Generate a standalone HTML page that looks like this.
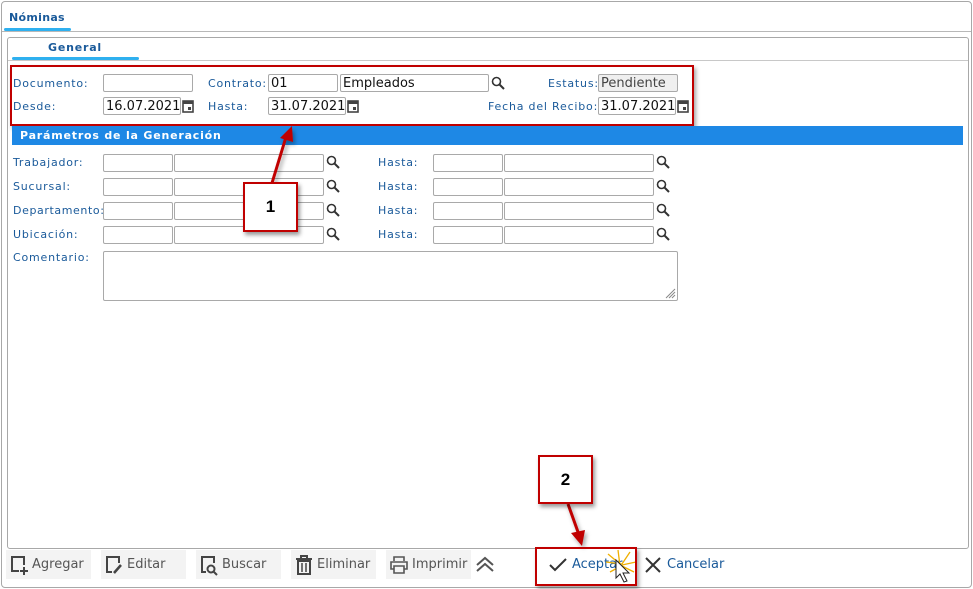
<!DOCTYPE html>
<html><head><meta charset="utf-8"><style>
*{box-sizing:border-box;margin:0;padding:0}
body{width:973px;height:589px;background:#fff;position:relative;overflow:hidden;font-family:"DejaVu Sans","Liberation Sans",sans-serif;font-size:11px}
.a{position:absolute}
.lbl{position:absolute;color:#1a5a9a;font-size:11px;line-height:13px;white-space:nowrap;letter-spacing:.8px}
.in{position:absolute;height:18px;border:1px solid #a9a9a9;border-radius:2px;background:#fff;font-size:13px;line-height:16px;padding-left:2px;padding-top:1px;color:#111}
.srch{position:absolute;width:14px;height:14px}
.cal{position:absolute;width:12px;height:14px}
.btn{position:absolute;top:550px;height:29px;background:#f3f3f3;color:#555;font-size:13px;line-height:29px}
.btn svg{position:absolute;left:3px;top:4px}
.btn span{position:absolute;left:26px}
</style></head><body>
<div class="a" style="left:1px;top:1px;width:971px;height:587px;border:1px solid #a8a8a8;border-radius:4px"></div>
<div class="a" style="left:9px;top:11px;color:#1a5a9a;font-weight:bold;font-size:11px;letter-spacing:.3px">Nóminas</div>
<div class="a" style="left:4px;top:28px;width:67px;height:3px;background:#2fb0ef;border-radius:2px"></div>
<div class="a" style="left:2px;top:31px;width:969px;height:1px;background:#b8b8b8"></div>
<div class="a" style="left:7px;top:37px;width:962px;height:512px;border:1px solid #a8a8a8;border-radius:3px"></div>
<div class="a" style="left:48px;top:41px;color:#1a5a9a;font-weight:bold;font-size:11px;letter-spacing:.8px">General</div>
<div class="a" style="left:12px;top:57px;width:127px;height:3px;background:#2fb0ef;border-radius:2px"></div>
<div class="a" style="left:8px;top:60px;width:960px;height:1px;background:#c8c8c8"></div>

<div class="a" style="left:10px;top:65px;width:684px;height:61px;border:2px solid #c00000;box-shadow:2px 3px 4px rgba(0,0,0,.35)"></div>

<div class="lbl" style="left:13px;top:77px">Documento:</div>
<div class="in" style="left:103px;top:74px;width:90px"></div>
<div class="lbl" style="left:208px;top:77px">Contrato:</div>
<div class="in" style="left:268px;top:74px;width:70px">01</div>
<div class="in" style="left:340px;top:74px;width:149px">Empleados</div>
<svg class="srch" style="left:491px;top:76px" viewBox="0 0 14 14"><circle cx="5.5" cy="5.5" r="4" fill="none" stroke="#333" stroke-width="1.6"/><path d="M8.5 8.5L13 13" stroke="#333" stroke-width="2"/></svg>
<div class="lbl" style="left:548px;top:77px">Estatus:</div>
<div class="in" style="left:598px;top:74px;width:80px;background:#efefef;color:#444">Pendiente</div>

<div class="lbl" style="left:13px;top:100px">Desde:</div>
<div class="in" style="left:103px;top:97px;width:78px">16.07.2021</div>
<svg class="cal" style="left:182px;top:99px" viewBox="0 0 12 14"><rect x="1" y="2" width="10" height="11" fill="none" stroke="#444" stroke-width="1.6"/><rect x="1" y="2" width="10" height="3" fill="#444"/><rect x="6" y="8" width="3" height="3" fill="#444"/></svg>
<div class="lbl" style="left:208px;top:100px">Hasta:</div>
<div class="in" style="left:268px;top:97px;width:78px">31.07.2021</div>
<svg class="cal" style="left:347px;top:99px" viewBox="0 0 12 14"><rect x="1" y="2" width="10" height="11" fill="none" stroke="#444" stroke-width="1.6"/><rect x="1" y="2" width="10" height="3" fill="#444"/><rect x="6" y="8" width="3" height="3" fill="#444"/></svg>
<div class="lbl" style="left:488px;top:100px">Fecha del Recibo:</div>
<div class="in" style="left:598px;top:97px;width:78px">31.07.2021</div>
<svg class="cal" style="left:677px;top:99px" viewBox="0 0 12 14"><rect x="1" y="2" width="10" height="11" fill="none" stroke="#444" stroke-width="1.6"/><rect x="1" y="2" width="10" height="3" fill="#444"/><rect x="6" y="8" width="3" height="3" fill="#444"/></svg>

<div class="a" style="left:12px;top:126px;width:951px;height:19px;background:#1e88e5;color:#fff;font-weight:bold;font-size:11px;line-height:19px;padding-left:8px;letter-spacing:.8px">Parámetros de la Generación</div>

<div class="lbl" style="left:13px;top:156px">Trabajador:</div>
<div class="lbl" style="left:13px;top:180px">Sucursal:</div>
<div class="lbl" style="left:13px;top:204px;letter-spacing:.6px">Departamento:</div>
<div class="lbl" style="left:13px;top:228px">Ubicación:</div>
<div class="lbl" style="left:13px;top:251px">Comentario:</div>

<div class="in" style="left:103px;top:154px;width:70px"></div><div class="in" style="left:174px;top:154px;width:150px"></div>
<div class="in" style="left:103px;top:178px;width:70px"></div><div class="in" style="left:174px;top:178px;width:150px"></div>
<div class="in" style="left:103px;top:202px;width:70px"></div><div class="in" style="left:174px;top:202px;width:150px"></div>
<div class="in" style="left:103px;top:226px;width:70px"></div><div class="in" style="left:174px;top:226px;width:150px"></div>
<svg class="srch" style="left:326px;top:155px" viewBox="0 0 14 14"><circle cx="5.5" cy="5.5" r="4" fill="none" stroke="#333" stroke-width="1.6"/><path d="M8.5 8.5L13 13" stroke="#333" stroke-width="2"/></svg>
<svg class="srch" style="left:326px;top:179px" viewBox="0 0 14 14"><circle cx="5.5" cy="5.5" r="4" fill="none" stroke="#333" stroke-width="1.6"/><path d="M8.5 8.5L13 13" stroke="#333" stroke-width="2"/></svg>
<svg class="srch" style="left:326px;top:203px" viewBox="0 0 14 14"><circle cx="5.5" cy="5.5" r="4" fill="none" stroke="#333" stroke-width="1.6"/><path d="M8.5 8.5L13 13" stroke="#333" stroke-width="2"/></svg>
<svg class="srch" style="left:326px;top:227px" viewBox="0 0 14 14"><circle cx="5.5" cy="5.5" r="4" fill="none" stroke="#333" stroke-width="1.6"/><path d="M8.5 8.5L13 13" stroke="#333" stroke-width="2"/></svg>

<div class="lbl" style="left:378px;top:156px">Hasta:</div>
<div class="lbl" style="left:378px;top:180px">Hasta:</div>
<div class="lbl" style="left:378px;top:204px">Hasta:</div>
<div class="lbl" style="left:378px;top:228px">Hasta:</div>
<div class="in" style="left:433px;top:154px;width:70px"></div><div class="in" style="left:504px;top:154px;width:150px"></div>
<div class="in" style="left:433px;top:178px;width:70px"></div><div class="in" style="left:504px;top:178px;width:150px"></div>
<div class="in" style="left:433px;top:202px;width:70px"></div><div class="in" style="left:504px;top:202px;width:150px"></div>
<div class="in" style="left:433px;top:226px;width:70px"></div><div class="in" style="left:504px;top:226px;width:150px"></div>
<svg class="srch" style="left:656px;top:155px" viewBox="0 0 14 14"><circle cx="5.5" cy="5.5" r="4" fill="none" stroke="#333" stroke-width="1.6"/><path d="M8.5 8.5L13 13" stroke="#333" stroke-width="2"/></svg>
<svg class="srch" style="left:656px;top:179px" viewBox="0 0 14 14"><circle cx="5.5" cy="5.5" r="4" fill="none" stroke="#333" stroke-width="1.6"/><path d="M8.5 8.5L13 13" stroke="#333" stroke-width="2"/></svg>
<svg class="srch" style="left:656px;top:203px" viewBox="0 0 14 14"><circle cx="5.5" cy="5.5" r="4" fill="none" stroke="#333" stroke-width="1.6"/><path d="M8.5 8.5L13 13" stroke="#333" stroke-width="2"/></svg>
<svg class="srch" style="left:656px;top:227px" viewBox="0 0 14 14"><circle cx="5.5" cy="5.5" r="4" fill="none" stroke="#333" stroke-width="1.6"/><path d="M8.5 8.5L13 13" stroke="#333" stroke-width="2"/></svg>

<div class="in" style="left:103px;top:251px;width:575px;height:50px"></div>
<svg class="a" style="left:664px;top:287px" width="12" height="12"><path d="M11 2L2 11M11 5L5 11M11 8L8 11" stroke="#888" stroke-width="1"/></svg>

<svg class="a" style="left:0;top:0" width="973" height="589">
<defs><filter id="sh"><feDropShadow dx="2" dy="3" stdDeviation="2" flood-opacity=".35"/></filter></defs>
<g filter="url(#sh)">
<path d="M272 183L286 137" stroke="#c00000" stroke-width="3"/><path d="M280 138L292 126L293 142Z" fill="#c00000"/>
<path d="M568 504L578 532" stroke="#c00000" stroke-width="3"/><path d="M571 533L582 546L585 530Z" fill="#c00000"/>
</g>
</svg>
<div class="a" style="left:243px;top:182px;width:55px;height:50px;border:2px solid #c00000;background:#fff;box-shadow:2px 3px 4px rgba(0,0,0,.4);font:bold 17px 'Liberation Sans',sans-serif;text-align:center;line-height:46px">1</div>
<div class="a" style="left:538px;top:455px;width:55px;height:49px;border:2px solid #c00000;background:#fff;box-shadow:2px 3px 4px rgba(0,0,0,.4);font:bold 17px 'Liberation Sans',sans-serif;text-align:center;line-height:45px">2</div>

<div class="btn" style="left:6px;width:85px"><svg width="20" height="22" viewBox="0 0 20 22"><path d="M10 17H3V3H15V11" fill="none" stroke="#444" stroke-width="2"/><path d="M15 13V21M11 17H19" stroke="#444" stroke-width="2"/></svg><span>Agregar</span></div>
<div class="btn" style="left:101px;width:85px"><svg width="20" height="22" viewBox="0 0 20 22"><path d="M8 18H3V3H15V9" fill="none" stroke="#444" stroke-width="2"/><path d="M10 19L17 11" stroke="#444" stroke-width="2.5"/></svg><span>Editar</span></div>
<div class="btn" style="left:196px;width:85px"><svg width="20" height="22" viewBox="0 0 20 22"><path d="M7 18H3V3H15V9" fill="none" stroke="#444" stroke-width="2"/><circle cx="12" cy="15" r="3.5" fill="none" stroke="#444" stroke-width="2"/><path d="M14.5 17.5L18 21" stroke="#444" stroke-width="2"/></svg><span>Buscar</span></div>
<div class="btn" style="left:291px;width:85px"><svg width="20" height="22" viewBox="0 0 20 22"><path d="M2 5H18M7 5V2H13V5" fill="none" stroke="#444" stroke-width="2"/><path d="M4 7H16V20H4Z" fill="none" stroke="#444" stroke-width="2"/><path d="M8 9V18M12 9V18" stroke="#444" stroke-width="1.5"/></svg><span>Eliminar</span></div>
<div class="btn" style="left:386px;width:85px"><svg width="20" height="22" viewBox="0 0 20 22"><path d="M5 7V3H15V7M5 15H2V8H18V15H15" fill="none" stroke="#555" stroke-width="1.6"/><path d="M5 12H15V19H5Z" fill="none" stroke="#555" stroke-width="1.6"/></svg><span>Imprimir</span></div>
<div class="btn" style="left:472px;width:26px;background:#fff"><svg width="20" height="22" viewBox="0 0 20 22"><path d="M2 11L10 4L18 11M2 17L10 10L18 17" fill="none" stroke="#555" stroke-width="2"/></svg></div>

<svg class="a" style="left:549px;top:557px" width="18" height="16"><path d="M1 8L6 13L17 2" fill="none" stroke="#333" stroke-width="2"/></svg>
<div class="a" style="left:572px;top:557px;color:#1a5a9a;font-size:13px">Aceptar</div>
<svg class="a" style="left:604px;top:548px" width="34" height="40"><g stroke="#f0b000" stroke-width="1.3"><path d="M14 2L16 18M4 6L16 16M2 14L18 16M26 4L18 16M32 14L18 17M30 24L18 18M6 24L17 18"/></g><path d="M12 12L12 30L16 26L20 34L23 33L19 25L25 25Z" fill="#fff" stroke="#222" stroke-width="1"/></svg>
<svg class="a" style="left:645px;top:557px" width="16" height="16"><path d="M1 1L15 15M15 1L1 15" stroke="#333" stroke-width="2"/></svg>
<div class="a" style="left:667px;top:557px;color:#1a5a9a;font-size:13px">Cancelar</div>
<div class="a" style="left:535px;top:547px;width:102px;height:39px;border:2px solid #c00000;box-shadow:2px 3px 4px rgba(0,0,0,.35)"></div>
</body></html>
